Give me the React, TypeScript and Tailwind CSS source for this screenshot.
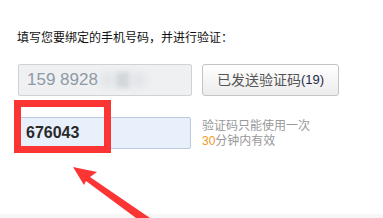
import React from 'react';

const font = { fontFamily: '"Liberation Sans", "Noto Sans CJK SC", sans-serif' };

function App() {
  return (
    <div className="relative h-[218px] w-[383px] overflow-hidden bg-white flex flex-col" style={font}>
      {/* Form */}
      <div className="flex-1 pt-[30px] pl-[17px]">
        <p className="text-[12px] leading-[16px] text-[#111]">填写您要绑定的手机号码，并进行验证：</p>

        <div className="mt-[18px] flex items-center">
          <div className="relative ml-[1px] flex h-[32px] w-[174px] items-center rounded-[2px] border border-[#cfd3d6] bg-[#eef0f2] pl-[8px] text-[17px] text-[#8d9aa6]">
            <span>159 8928</span>
            <div className="ml-[2px] flex items-center">
              <div className="h-[16px] w-[16px] rounded-full bg-[#e2e5e8] blur-[3px]" />
              <div className="h-[16px] w-[14px] bg-[#d4d8dc] blur-[2px]" />
              <div className="h-[16px] w-[16px] rounded-full bg-[#e2e5e8] blur-[3px]" />
            </div>
          </div>
          <button className="ml-[10px] flex h-[32px] w-[137px] items-center justify-center rounded-[3px] border border-[#c4c4c4] bg-gradient-to-b from-white to-[#ececec] text-[14px] text-[#555]">
            已发送验证码<span className="text-[13px] font-medium text-[#1c2a48]">(19)</span>
          </button>
        </div>

        <div className="mt-[21px] flex items-start">
          <div className="ml-[1px] flex h-[32px] w-[173px] items-center rounded-[2px] border border-[#b9cbe0] bg-[#e8f1fb] pl-[7px] text-[16px] font-bold text-[#2a2a2a]">
            676043
          </div>
          <div className="ml-[11px] mt-[2px] text-[12px] leading-[15px] text-[#999]">
            <p>验证码只能使用一次</p>
            <p><span className="text-[#f39a1d]">30</span>分钟内有效</p>
          </div>
        </div>
      </div>

      <div className="h-[4px] bg-[#f6f6f6]" />

      {/* Annotation: red box and arrow */}
      <div className="pointer-events-none absolute left-[14px] top-[100px] h-[53px] w-[97px] border-[7px] border-[#fb3434]" />
      <svg className="pointer-events-none absolute left-0 top-0" width="383" height="218" viewBox="0 0 383 218">
        <polygon
          points="73,167 97,172 90,177 150,218 136,218 86,181 84,185"
          fill="#fb3434"
        />
      </svg>
    </div>
  );
}

export default App;
